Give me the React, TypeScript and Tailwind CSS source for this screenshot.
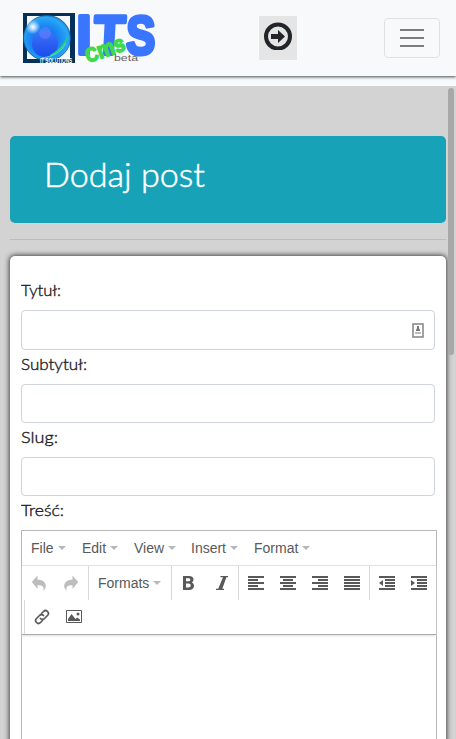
import React from "react";

const lato = "font-['Lato',sans-serif]";
const arial = "font-['Liberation_Sans',Arial,sans-serif]";

function Logo() {
  return (
    <svg width="140" height="60" viewBox="0 0 140 60" className="block overflow-visible">
      <defs>
        <radialGradient id="orb" cx="0.45" cy="0.55" r="0.58">
          <stop offset="0" stopColor="#2a6cf5" />
          <stop offset="0.45" stopColor="#1a7cf2" />
          <stop offset="0.7" stopColor="#1f96f4" />
          <stop offset="0.88" stopColor="#2ba8f6" />
          <stop offset="1" stopColor="#1b78c8" />
        </radialGradient>
        <radialGradient id="shine">
          <stop offset="0" stopColor="#fff" />
          <stop offset="0.3" stopColor="#e4f0ff" stopOpacity="0.85" />
          <stop offset="1" stopColor="#b9dcff" stopOpacity="0" />
        </radialGradient>
        <linearGradient id="core" x1="0" y1="0" x2="0" y2="1">
          <stop offset="0" stopColor="#3f74fa" />
          <stop offset="1" stopColor="#1b42ea" />
        </linearGradient>
      </defs>
      <rect x="0" y="0" width="52" height="50" fill="#05305a" />
      <rect x="4" y="3" width="43" height="43" fill="#f4f8fb" />
      <ellipse cx="24" cy="25" rx="23.500" ry="22.500" fill="url(#orb)" stroke="#0b5a9f" strokeWidth="0.800" />
      <ellipse cx="22" cy="31" rx="13" ry="13" fill="url(#core)" opacity="0.85" />
      <path d="M27 44 Q43 38 45 22 Q40 35 27 42 Z" fill="#28d46c" />
      <path d="M19 45 Q37 43 43 30" fill="none" stroke="#63d3ff" strokeWidth="0.800" />
      <circle cx="22" cy="20" r="6" fill="#8d8cff" opacity="0.35" />
      <circle cx="10" cy="14" r="7.500" fill="url(#shine)" />
      <text x="17" y="49.500" fontFamily="Liberation Sans, sans-serif" fontWeight="700" fontSize="6.500" fill="#fff" textLength="32" lengthAdjust="spacingAndGlyphs">IT SOLUTIONS</text>
      <g fontFamily="Liberation Sans, sans-serif" fontWeight="700" fill="#3a75ff" stroke="#3a75ff" strokeWidth="4" strokeLinejoin="round">
        <text transform="translate(53.500 41)" fontSize="55" textLength="15" lengthAdjust="spacingAndGlyphs">I</text>
        <text transform="translate(70 41) skewX(-3)" fontSize="55" textLength="31" lengthAdjust="spacingAndGlyphs">T</text>
        <text transform="translate(103 40.500) skewX(-1)" fontSize="54" textLength="29" lengthAdjust="spacingAndGlyphs">S</text>
      </g>
      <text transform="translate(65 50) rotate(-19)" fontFamily="Liberation Sans, sans-serif" fontWeight="700" fontSize="23" fill="#3fda4b" stroke="#3fda4b" strokeWidth="1.600" strokeLinejoin="round" textLength="41" lengthAdjust="spacingAndGlyphs"><tspan fontSize="20">C</tspan>ms</text>
      <text x="91" y="48" fontFamily="Liberation Sans, sans-serif" fontSize="9" fill="#666" textLength="24" lengthAdjust="spacingAndGlyphs">beta</text>
    </svg>
  );
}

function Header() {
  return (
    <header className="relative z-10 flex h-[76px] shrink-0 bg-[#f8f9fb] shadow-[0_1px_3px_#404848]">
      <div className="ml-[23px] mt-[13px] w-[236px]"><Logo /></div>
      <button className="mt-4 flex h-11 w-[38px] justify-center bg-[#e5e5e5] pt-[6px]">
        <svg width="28" height="28" viewBox="0 0 28 28">
          <circle cx="14" cy="14.500" r="12" fill="none" stroke="#212529" strokeWidth="4" />
          <path d="M7 12h7V8l7 6.500-7 6.500v-4H7z" fill="#212529" />
        </svg>
      </button>
      <button className="ml-[87px] mt-[18px] flex h-10 w-14 flex-col items-center justify-center gap-[6px] rounded-[4px] border border-[#dfe0e2]">
        <span className="h-[2px] w-6 bg-[#7b7c7e]" />
        <span className="h-[2px] w-6 bg-[#7b7c7e]" />
        <span className="h-[2px] w-6 bg-[#7b7c7e]" />
      </button>
    </header>
  );
}

function Label({ text, width }: { text: string; width: number }) {
  return (
    <label className="block h-6">
      <svg width="100" height="24" className="block">
        <text x="0" y="17.500" fontSize="16" fontWeight="300" stroke="#212529" strokeWidth="0.400" fontFamily="Lato, sans-serif" fill="#212529" textLength={width} lengthAdjust="spacingAndGlyphs">{text}</text>
      </svg>
    </label>
  );
}

function AlignIcon({ kind }: { kind: "left" | "center" | "right" | "full" | "outdent" | "indent" }) {
  const dented = kind === "outdent" || kind === "indent";
  return (
    <svg width="16" height="14" viewBox="0 0 16 14" fill="#595959" shapeRendering="crispEdges">
      {[0, 1, 2, 3, 4].map((row) => {
        let x = 0;
        let w = 16;
        if (dented) {
          if (row > 0 && row < 4) { x = 6; w = 10; }
        } else if (row % 2 === 1 && kind !== "full") {
          w = 10;
          x = kind === "left" ? 0 : kind === "center" ? 3 : 6;
        }
        return <rect key={row} x={x} y={row * 3} width={w} height="2" />;
      })}
      {kind === "outdent" && <path d="M4 4v6L0 7z" shapeRendering="auto" />}
      {kind === "indent" && <path d="M0 4v6l4-3z" shapeRendering="auto" />}
    </svg>
  );
}

function Curl({ flip = false }: { flip?: boolean }) {
  return (
    <svg width="16" height="16" viewBox="0 0 16 16" fill="#bdbdbd" className={flip ? "-scale-x-100" : ""}>
      <path d="M6.500 .500v4.300c5-.2 8.300 2.600 8.300 6.200 0 1.700-1 3.500-2.400 5 .800-4-.400-5.700-5.900-5.700v3.700L.800 7z" />
    </svg>
  );
}

function Caret() {
  return <svg width="8" height="4" viewBox="0 0 8 4" className="ml-1"><path d="M0 0h8L4 4z" fill="#b5b9bf" /></svg>;
}

function Tool({ children }: { children: React.ReactNode }) {
  return <button className="flex h-[34px] w-8 items-center justify-center">{children}</button>;
}

function MenuItem({ text, width }: { text: string; width: string }) {
  return <button className={`flex h-full items-center text-[14px] text-[#595959] ${width}`}>{text}<Caret /></button>;
}

function Editor() {
  return (
    <section className={`mt-2 h-[260px] w-[416px] border border-[#b8b8b8] bg-white ${arial}`}>
      <div className="flex h-[35px] border-b border-[#e2e2e2] pl-[9px]">
        <MenuItem text="File" width="w-[51px]" />
        <MenuItem text="Edit" width="w-[52px]" />
        <MenuItem text="View" width="w-[57px]" />
        <MenuItem text="Insert" width="w-[63px]" />
        <MenuItem text="Format" width="w-[62px]" />
      </div>
      <div className="h-[69px] border-b border-[#a9a9a9] shadow-[0_1px_2px_#ddd]">
        <div className="flex h-[34px]">
          <div className="flex w-[66px] pl-[1px]"><Tool><Curl /></Tool><Tool><Curl flip /></Tool></div>
          <div className="flex w-[83px] items-center border-l border-[#d9d9d9] pl-[9px] text-[14px] text-[#595959]">Formats<Caret /></div>
          <div className="flex w-[67px] border-l border-[#d9d9d9]">
            <Tool>
              <svg width="16" height="16" viewBox="0 0 16 16"><path fill="#595959" fillRule="evenodd" d="M3 1h6c3 0 4.500 1.300 4.500 3.500 0 1.300-.7 2.400-1.800 3 1.500.5 2.300 1.700 2.300 3.300C14 13.500 12.200 15 9 15H3zm3 2.300v3h2c1.500 0 2.300-.5 2.300-1.500S9.600 3.300 8.200 3.300zm0 5.300v4h2.400c1.500 0 2.300-.7 2.300-2s-.8-2-2.300-2z" /></svg>
            </Tool>
            <Tool>
              <svg width="16" height="16" viewBox="0 0 16 16" className="ml-[3px]"><path fill="#595959" d="M6.500 1H14v1.300h-1.600L8.300 13.700H10V15H2v-1.300h2.200L9 2.300H6.500z" /></svg>
            </Tool>
          </div>
          <div className="flex w-[131px] border-l border-[#d9d9d9] pl-[1px]">
            <Tool><AlignIcon kind="left" /></Tool>
            <Tool><AlignIcon kind="center" /></Tool>
            <Tool><AlignIcon kind="right" /></Tool>
            <Tool><AlignIcon kind="full" /></Tool>
          </div>
          <div className="flex border-l border-[#d9d9d9] pl-[1px]">
            <Tool><AlignIcon kind="outdent" /></Tool>
            <Tool><AlignIcon kind="indent" /></Tool>
          </div>
        </div>
        <div className="ml-[2px] flex h-[34px] border-l border-[#d9d9d9] pl-[1px]">
          <Tool>
            <svg width="16" height="16" viewBox="0 0 16 16" fill="none" stroke="#595959" strokeWidth="1.700" strokeLinecap="round">
              <path d="m7.500 4.500 2-2a2.650 2.650 0 0 1 4 4l-3 3a2.650 2.650 0 0 1-4 0M8.500 11.500l-2 2a2.650 2.650 0 0 1-4-4l3-3a2.650 2.650 0 0 1 4 0" />
            </svg>
          </Tool>
          <Tool>
            <svg width="16" height="14" viewBox="0 0 16 14">
              <path fill="none" stroke="#595959" d="M.5.500h15v12H.5z" />
              <path fill="#595959" d="M2 11V9l3.500-5 4 5L11 7.500l3 2V11z" />
              <circle cx="12" cy="4" r="1.500" fill="#595959" />
            </svg>
          </Tool>
        </div>
      </div>
    </section>
  );
}

function InputBox({ children, height }: { children?: React.ReactNode; height: string }) {
  return <div className={`flex w-[414px] items-center justify-end rounded-[4px] border border-[#ced4da] bg-white pr-[10px] ${height}`}>{children}</div>;
}

export default function App() {
  return (
    <div className={`flex h-[739px] w-[456px] flex-col overflow-hidden bg-[#f8fafc] ${lato}`}>
      <Header />
      <div className="mt-[10px] flex h-[653px] bg-[#d3d3d3] pl-[10px]">
        <main className="w-[436px] pt-[50px]">
          <div className="h-[87px] rounded-[5px] bg-[#17a2b8] pl-[35px] pt-[16px]">
            <h1>
              <svg width="180" height="48" className="block overflow-visible">
                <text x="-1" y="35" fontSize="33" fontWeight="300" stroke="#fff" strokeWidth="0.500" fontFamily="Lato, sans-serif" fill="#fff" textLength="161" lengthAdjust="spacingAndGlyphs">Dodaj post</text>
              </svg>
            </h1>
          </div>
          <hr className="mt-4 border-[#bdbdbd]" />
          <form className="mt-4 h-[500px] rounded-[5px] bg-white pl-[11px] pt-[22px] shadow-[0_0_5px_1px_#444]">
            <Label text="Tytuł:" width={40} />
            <div className="mt-2"><InputBox height="h-10">
              <svg width="12" height="15" viewBox="0 0 12 15">
                <rect x="1" y="1" width="10" height="13" fill="#fff" stroke="#8b8b8b" strokeWidth="1.600" />
                <path d="M5 3h2v2l1 2v1H4V7l1-2z" fill="#777" />
                <path d="M3 9h6v2H3z" fill="#bbb" />
              </svg>
            </InputBox></div>
            <div className="mt-[2px]"><Label text="Subtytuł:" width={66} /></div>
            <div className="mt-2"><InputBox height="h-[39px]" /></div>
            <div className="mt-[2px]"><Label text="Slug:" width={37} /></div>
            <div className="mt-2"><InputBox height="h-[39px]" /></div>
            <div className="mt-[2px]"><Label text="Treść:" width={43} /></div>
            <Editor />
          </form>
        </main>
        <div className="relative z-10 ml-[2px] mt-[2px] h-[267px] w-[6px] rounded-[3px] bg-[#a8a8a8]" />
      </div>
    </div>
  );
}
